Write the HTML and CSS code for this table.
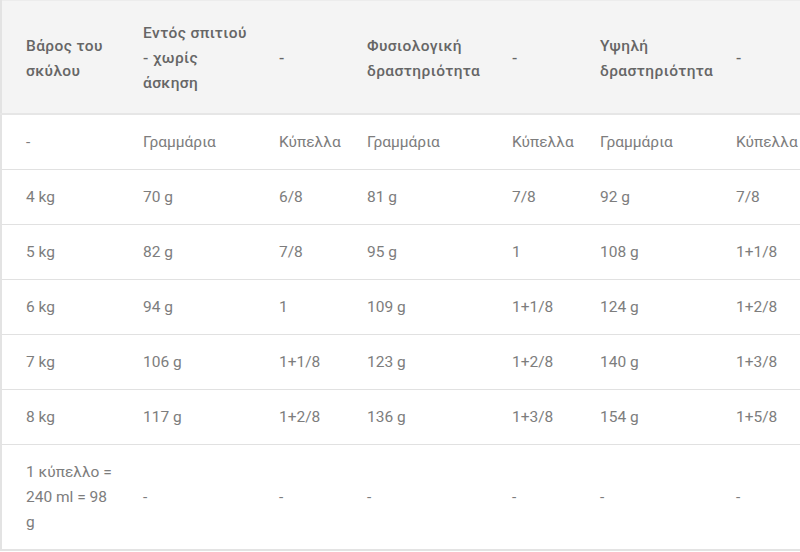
FILE: index.html
```html
<!DOCTYPE html>
<html lang="el">
<head>
<meta charset="utf-8">
<title>Πίνακας σίτισης</title>
<link rel="stylesheet" href="styles.css">
</head>
<body>
<table class="feed">
  <colgroup>
    <col class="c1"><col class="c2"><col class="c3"><col class="c4"><col class="c5"><col class="c6"><col class="c7">
  </colgroup>
  <thead>
    <tr>
      <th>Βάρος του σκύλου</th>
      <th>Εντός σπιτιού - χωρίς άσκηση</th>
      <th>-</th>
      <th>Φυσιολογική δραστηριότητα</th>
      <th>-</th>
      <th>Υψηλή δραστηριότητα</th>
      <th>-</th>
    </tr>
  </thead>
  <tbody>
    <tr class="sub"><td>-</td><td>Γραμμάρια</td><td>Κύπελλα</td><td>Γραμμάρια</td><td>Κύπελλα</td><td>Γραμμάρια</td><td>Κύπελλα</td></tr>
    <tr><td>4 kg</td><td>70 g</td><td>6/8</td><td>81 g</td><td>7/8</td><td>92 g</td><td>7/8</td></tr>
    <tr><td>5 kg</td><td>82 g</td><td>7/8</td><td>95 g</td><td>1</td><td>108 g</td><td>1+1/8</td></tr>
    <tr><td>6 kg</td><td>94 g</td><td>1</td><td>109 g</td><td>1+1/8</td><td>124 g</td><td>1+2/8</td></tr>
    <tr><td>7 kg</td><td>106 g</td><td>1+1/8</td><td>123 g</td><td>1+2/8</td><td>140 g</td><td>1+3/8</td></tr>
    <tr><td>8 kg</td><td>117 g</td><td>1+2/8</td><td>136 g</td><td>1+3/8</td><td>154 g</td><td>1+5/8</td></tr>
    <tr><td>1 κύπελλο = 240 ml = 98 g</td><td>-</td><td>-</td><td>-</td><td>-</td><td>-</td><td>-</td></tr>
  </tbody>
</table>
</body>
</html>
```

FILE: styles.css
```css
html, body {
  margin: 0;
  padding: 0;
  background: #ffffff;
}

.feed {
  width: 800px;
  table-layout: fixed;
  border-collapse: collapse;
  border: 2px solid #e3e3e3;
  border-top: 1px solid #ececec;
  font-family: Roboto, "Noto Sans", sans-serif;
  font-size: 15.5px;
  line-height: 25px;
  color: #7d7d7d;
}

.c1 { width: 118px; }
.c2 { width: 136px; }
.c3 { width: 88px; }
.c4 { width: 145px; }
.c5 { width: 88px; }
.c6 { width: 136px; }
.c7 { width: 89px; }

.feed th,
.feed td {
  text-align: left;
  vertical-align: middle;
  padding: 15px 0 14px 24px;
}

.feed thead th {
  background: #f4f4f4;
  font-weight: 500;
  letter-spacing: 0.4px;
  color: #666666;
  padding-top: 20px;
  padding-bottom: 17px;
  border-bottom: 2px solid #e6e6e6;
}

.feed tbody tr + tr td {
  border-top: 1px solid #e1e1e1;
}
```
